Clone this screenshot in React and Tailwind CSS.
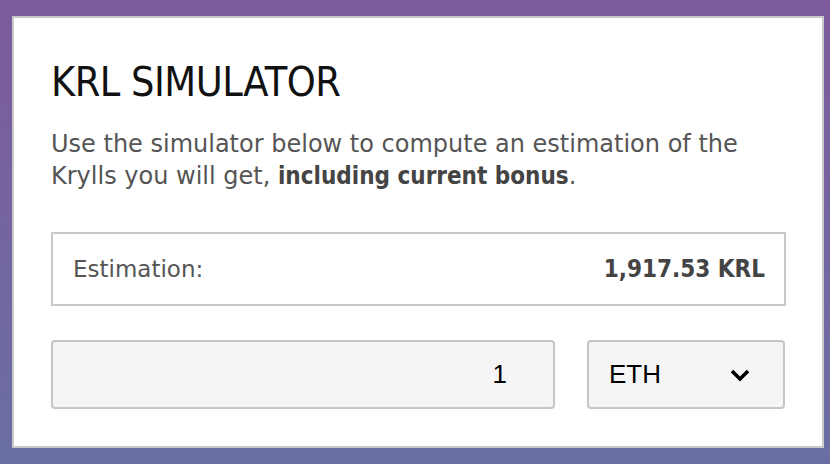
import React, { useState } from "react";

export default function App() {
  const [amount, setAmount] = useState("1");
  const [currency] = useState("ETH");

  // 1 ETH -> KRL (bonus inclus)
  const estimation = (parseFloat(amount) || 0) * 1917.53;
  const formatted = estimation.toLocaleString("en-US", {
    minimumFractionDigits: 2,
    maximumFractionDigits: 2,
  });

  return (
    <div className="w-[830px] h-[464px] bg-gradient-to-b from-[#7c5a9d] to-[#6a6fa3] pl-[12px] pt-[16px]">
      <section className="w-[812px] h-[432px] bg-white border-2 border-[#c9c9c9] pt-[40px] pl-[37px] pr-[36px] font-['DejaVu_Sans',sans-serif]">
        {/* titre */}
        <h1 className="font-['Liberation_Sans_Narrow','DejaVu_Sans_Condensed','Liberation_Sans',sans-serif] text-[41px] leading-[48px] text-[#111] tracking-[-0.5px]">
          KRL SIMULATOR
        </h1>

        <p className="mt-[22px] text-[24px] leading-[32px] text-[#555]">
          Use the simulator below to compute an estimation of the Krylls you will get,{" "}
          <b className="font-['DejaVu_Sans_Condensed','DejaVu_Sans',sans-serif] font-bold text-[#444]">
            including current bonus
          </b>
          .
        </p>

        {/* estimation */}
        <div className="mt-[40px] h-[74px] border-2 border-[#c9c9c9] flex items-center justify-between pl-[20px] pr-[19px]">
          <span className="text-[23px] text-[#555]">Estimation:</span>
          <span className="font-['DejaVu_Sans_Condensed','DejaVu_Sans',sans-serif] text-[24px] font-bold text-[#444]">
            {formatted} KRL
          </span>
        </div>

        {/* montant + devise */}
        <div className="mt-[34px] flex gap-[32px]">
          <input
            type="text"
            value={amount}
            onChange={(e) => setAmount(e.target.value)}
            className="w-[504px] h-[69px] rounded-[4px] border-2 border-[#c6c6c6] bg-[#f5f5f5] text-right pr-[46px] text-[26px] text-black font-['Liberation_Sans',sans-serif] outline-none"
          />
          <div className="w-[198px] h-[69px] rounded-[4px] border-2 border-[#c6c6c6] bg-[#f5f5f5] flex items-center justify-between pl-[20px] pr-[32px] font-['Liberation_Sans',sans-serif] text-[26px] text-black">
            <span>{currency}</span>
            <svg width="22" height="22" viewBox="0 0 22 22" fill="none">
              <polyline points="3,7 11,15 19,7" stroke="#000" strokeWidth="3.6" />
            </svg>
          </div>
        </div>
      </section>
    </div>
  );
}
